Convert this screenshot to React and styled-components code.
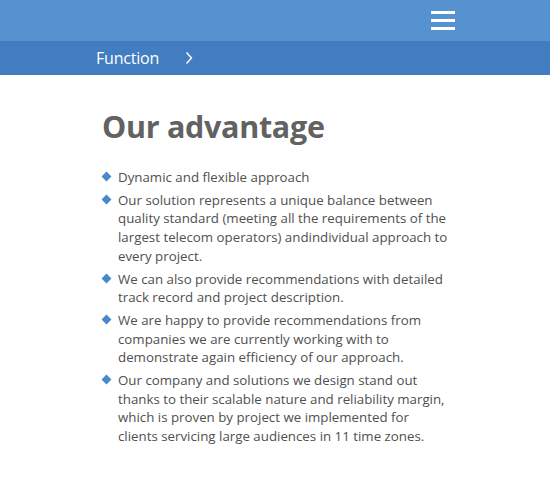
import React from 'react';
import styled, { createGlobalStyle } from 'styled-components';

const items = [
  'Dynamic and flexible approach',
  'Our solution represents a unique balance between quality standard (meeting all the requirements of the largest telecom operators) andindividual approach to every project.',
  'We can also provide recommendations with detailed track record and project description.',
  'We are happy to provide recommendations from companies we are currently working with to demonstrate again efficiency of our approach.',
  'Our company and solutions we design stand out thanks to their scalable nature and reliability margin, which is proven by project we implemented for clients servicing large audiences in 11 time zones.',
];

function App() {
  return (
    <>
      <GlobalStyle />
      <TopBar>
        <MenuButton aria-label='Menu'>
          <span />
          <span />
          <span />
        </MenuButton>
      </TopBar>
      <Crumbs>
        <CrumbLabel>Function</CrumbLabel>
        <svg width='10' height='14' viewBox='0 0 10 14'>
          <path d='M2.5 1.5 L7.5 7 L2.5 12.5' fill='none' stroke='#fff' strokeWidth='1.4' />
        </svg>
      </Crumbs>
      <Main>
        <Title>Our advantage</Title>
        <List>
          {items.map((text) => (
            <Item key={text}>{text}</Item>
          ))}
        </List>
      </Main>
    </>
  );
}

const GlobalStyle = createGlobalStyle`
  body {
    margin: 0;
    background: #fff;
    font-family: 'Open Sans', 'Noto Sans', sans-serif;
  }
`;

const TopBar = styled.header`
  height: 41px;
  background: #5692d0;
  display: flex;
  align-items: center;
  justify-content: flex-end;
  padding-right: 95px;
`;

const MenuButton = styled.div`
  width: 24px;
  height: 19px;
  display: flex;
  flex-direction: column;
  justify-content: space-between;
  margin-top: -1px;

  span {
    display: block;
    height: 3px;
    background: #fff;
  }
`;

const Crumbs = styled.nav`
  height: 34px;
  background: #417dc0;
  display: flex;
  align-items: center;
  gap: 25px;
  padding-left: 96px;
`;

const CrumbLabel = styled.span`
  color: #fff;
  font-size: 16px;
  letter-spacing: -0.2px;
`;

const Main = styled.main`
  padding: 31px 0 0 101px;
  width: 349px;
`;

const Title = styled.h1`
  margin: 0 0 22px 1px;
  font-size: 30.5px;
  line-height: 40px;
  font-weight: 700;
  color: #626262;
  letter-spacing: -0.3px;
`;

const List = styled.ul`
  list-style: none;
  margin: 0;
  padding: 0;
  display: flex;
  flex-direction: column;
  gap: 4px;
`;

const Item = styled.li`
  position: relative;
  padding-left: 17px;
  font-size: 13.3px;
  line-height: 18.7px;
  color: #505050;

  &::before {
    content: '';
    position: absolute;
    left: 2px;
    top: 5px;
    width: 7px;
    height: 7px;
    background: #4a88cc;
    transform: rotate(45deg);
  }
`;

export default App;
